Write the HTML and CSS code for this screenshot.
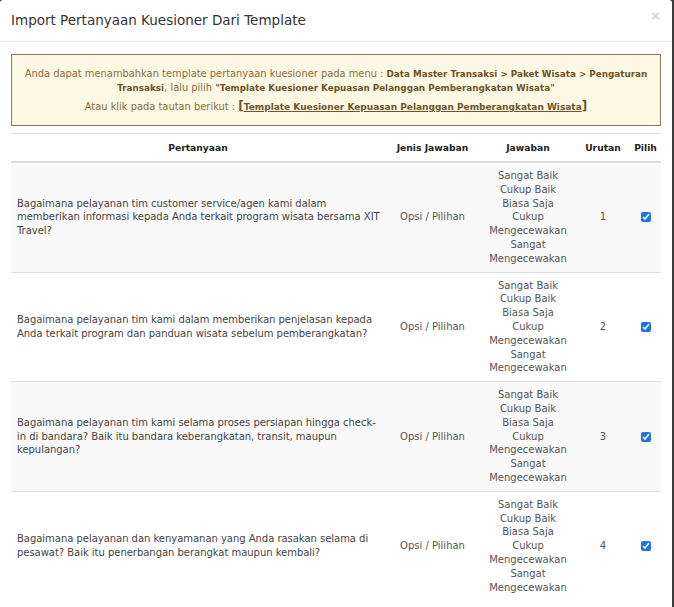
FILE: index.html
```html
<!DOCTYPE html>
<html lang="id">
<head>
<meta charset="utf-8">
<title>Import Pertanyaan Kuesioner Dari Template</title>
<link rel="stylesheet" href="styles.css">
</head>
<body>
<div class="modal">
  <div class="modal-header">
    <h4 class="modal-title">Import Pertanyaan Kuesioner Dari Template</h4>
    <span class="close">&times;</span>
  </div>
  <div class="modal-body">
    <div class="alert">
      <p>Anda dapat menambahkan template pertanyaan kuesioner pada menu : <b>Data Master Transaksi &gt; Paket Wisata &gt; Pengaturan Transaksi</b>, lalu pilih <b>"Template Kuesioner Kepuasan Pelanggan Pemberangkatan Wisata"</b></p>
      <p class="alt">Atau klik pada tautan berikut : <a class="link" href="#"><span class="br">[</span>Template Kuesioner Kepuasan Pelanggan Pemberangkatan Wisata<span class="br">]</span></a></p>
    </div>
    <table class="tbl">
      <thead>
        <tr>
          <th class="c-q">Pertanyaan</th>
          <th class="c-j">Jenis Jawaban</th>
          <th class="c-a">Jawaban</th>
          <th class="c-u">Urutan</th>
          <th class="c-p">Pilih</th>
        </tr>
      </thead>
      <tbody>
        <tr>
          <td class="q">Bagaimana pelayanan tim customer service/agen kami dalam memberikan informasi kepada Anda terkait program wisata bersama XIT Travel?</td>
          <td>Opsi / Pilihan</td>
          <td class="ans">Sangat Baik<br>Cukup Baik<br>Biasa Saja<br>Cukup Mengecewakan<br>Sangat Mengecewakan</td>
          <td>1</td>
          <td><input type="checkbox" checked></td>
        </tr>
        <tr>
          <td class="q">Bagaimana pelayanan tim kami dalam memberikan penjelasan kepada Anda terkait program dan panduan wisata sebelum pemberangkatan?</td>
          <td>Opsi / Pilihan</td>
          <td class="ans">Sangat Baik<br>Cukup Baik<br>Biasa Saja<br>Cukup Mengecewakan<br>Sangat Mengecewakan</td>
          <td>2</td>
          <td><input type="checkbox" checked></td>
        </tr>
        <tr>
          <td class="q">Bagaimana pelayanan tim kami selama proses persiapan hingga check-in di bandara? Baik itu bandara keberangkatan, transit, maupun kepulangan?</td>
          <td>Opsi / Pilihan</td>
          <td class="ans">Sangat Baik<br>Cukup Baik<br>Biasa Saja<br>Cukup Mengecewakan<br>Sangat Mengecewakan</td>
          <td>3</td>
          <td><input type="checkbox" checked></td>
        </tr>
        <tr>
          <td class="q">Bagaimana pelayanan dan kenyamanan yang Anda rasakan selama di pesawat? Baik itu penerbangan berangkat maupun kembali?</td>
          <td>Opsi / Pilihan</td>
          <td class="ans">Sangat Baik<br>Cukup Baik<br>Biasa Saja<br>Cukup Mengecewakan<br>Sangat Mengecewakan</td>
          <td>4</td>
          <td><input type="checkbox" checked></td>
        </tr>
      </tbody>
    </table>
  </div>
</div>
</body>
</html>
```
FILE: styles.css
```css
html, body {
  margin: 0;
  padding: 0;
  height: 100%;
}
body {
  background: #3b3b3b;
  font-family: "DejaVu Sans", "Open Sans", sans-serif;
  color: #555;
  overflow: hidden;
}
.modal {
  width: 672px;
  min-height: 100%;
  background: #fff;
  border-radius: 3px 3px 0 0;
}
.modal-header {
  display: flex;
  align-items: flex-start;
  justify-content: space-between;
  padding: 10px 11px;
  border-bottom: 1px solid #e5e5e5;
}
.modal-title {
  margin: 0;
  font-size: 13.5px;
  font-weight: normal;
  line-height: 21px;
  color: #333;
}
.close {
  font-size: 13px;
  line-height: 12px;
  color: #cfcfcf;
  font-weight: bold;
  margin-right: 0;
}
.modal-body {
  padding: 12px 11px 0 11px;
}
.alert {
  background: #fdf8e4;
  border: 1px solid #8a7a55;
  color: #8a6d3b;
  text-align: center;
  font-size: 9.9px;
  line-height: 14px;
  padding: 12px 10px 11px;
}
.alert p {
  margin: 0;
}
.alert b {
  color: #6e5527;
  font-size: 8.8px;
}
.alert .alt {
  margin-top: 5px;
}
.link {
  color: #6e5527;
  font-size: 9px;
  font-weight: bold;
  text-decoration: underline;
}
.link .br {
  font-size: 12px;
  line-height: 10px;
  text-decoration: none;
  display: inline-block;
}
.tbl {
  width: 650px;
  margin-top: 7px;
  border-collapse: collapse;
  table-layout: fixed;
  font-size: 10px;
}
.tbl th {
  box-sizing: border-box;
  color: #222;
  font-size: 9.2px;
  font-weight: bold;
  text-align: center;
  padding: 6px 3px;
  line-height: 15px;
  border-top: 1px solid #ddd;
  border-bottom: 2px solid #ddd;
}
.c-q { width: 374px; }
.c-j { width: 95px; }
.c-a { width: 96px; }
.c-u { width: 54px; }
.c-p { width: 31px; }
.tbl td {
  border-top: 1px solid #ddd;
  padding: 6px 6px;
  line-height: 13.8px;
  text-align: center;
  vertical-align: middle;
  color: #555;
}
.tbl td.q {
  text-align: left;
  color: #444;
  padding-right: 2px;
  letter-spacing: -0.03px;
}
.tbl tbody tr:nth-child(odd) td {
  background: #f9f9f9;
}
.tbl input[type="checkbox"] {
  width: 10px;
  height: 10px;
  margin: 0;
  accent-color: #1a73e8;
  vertical-align: middle;
}
```
